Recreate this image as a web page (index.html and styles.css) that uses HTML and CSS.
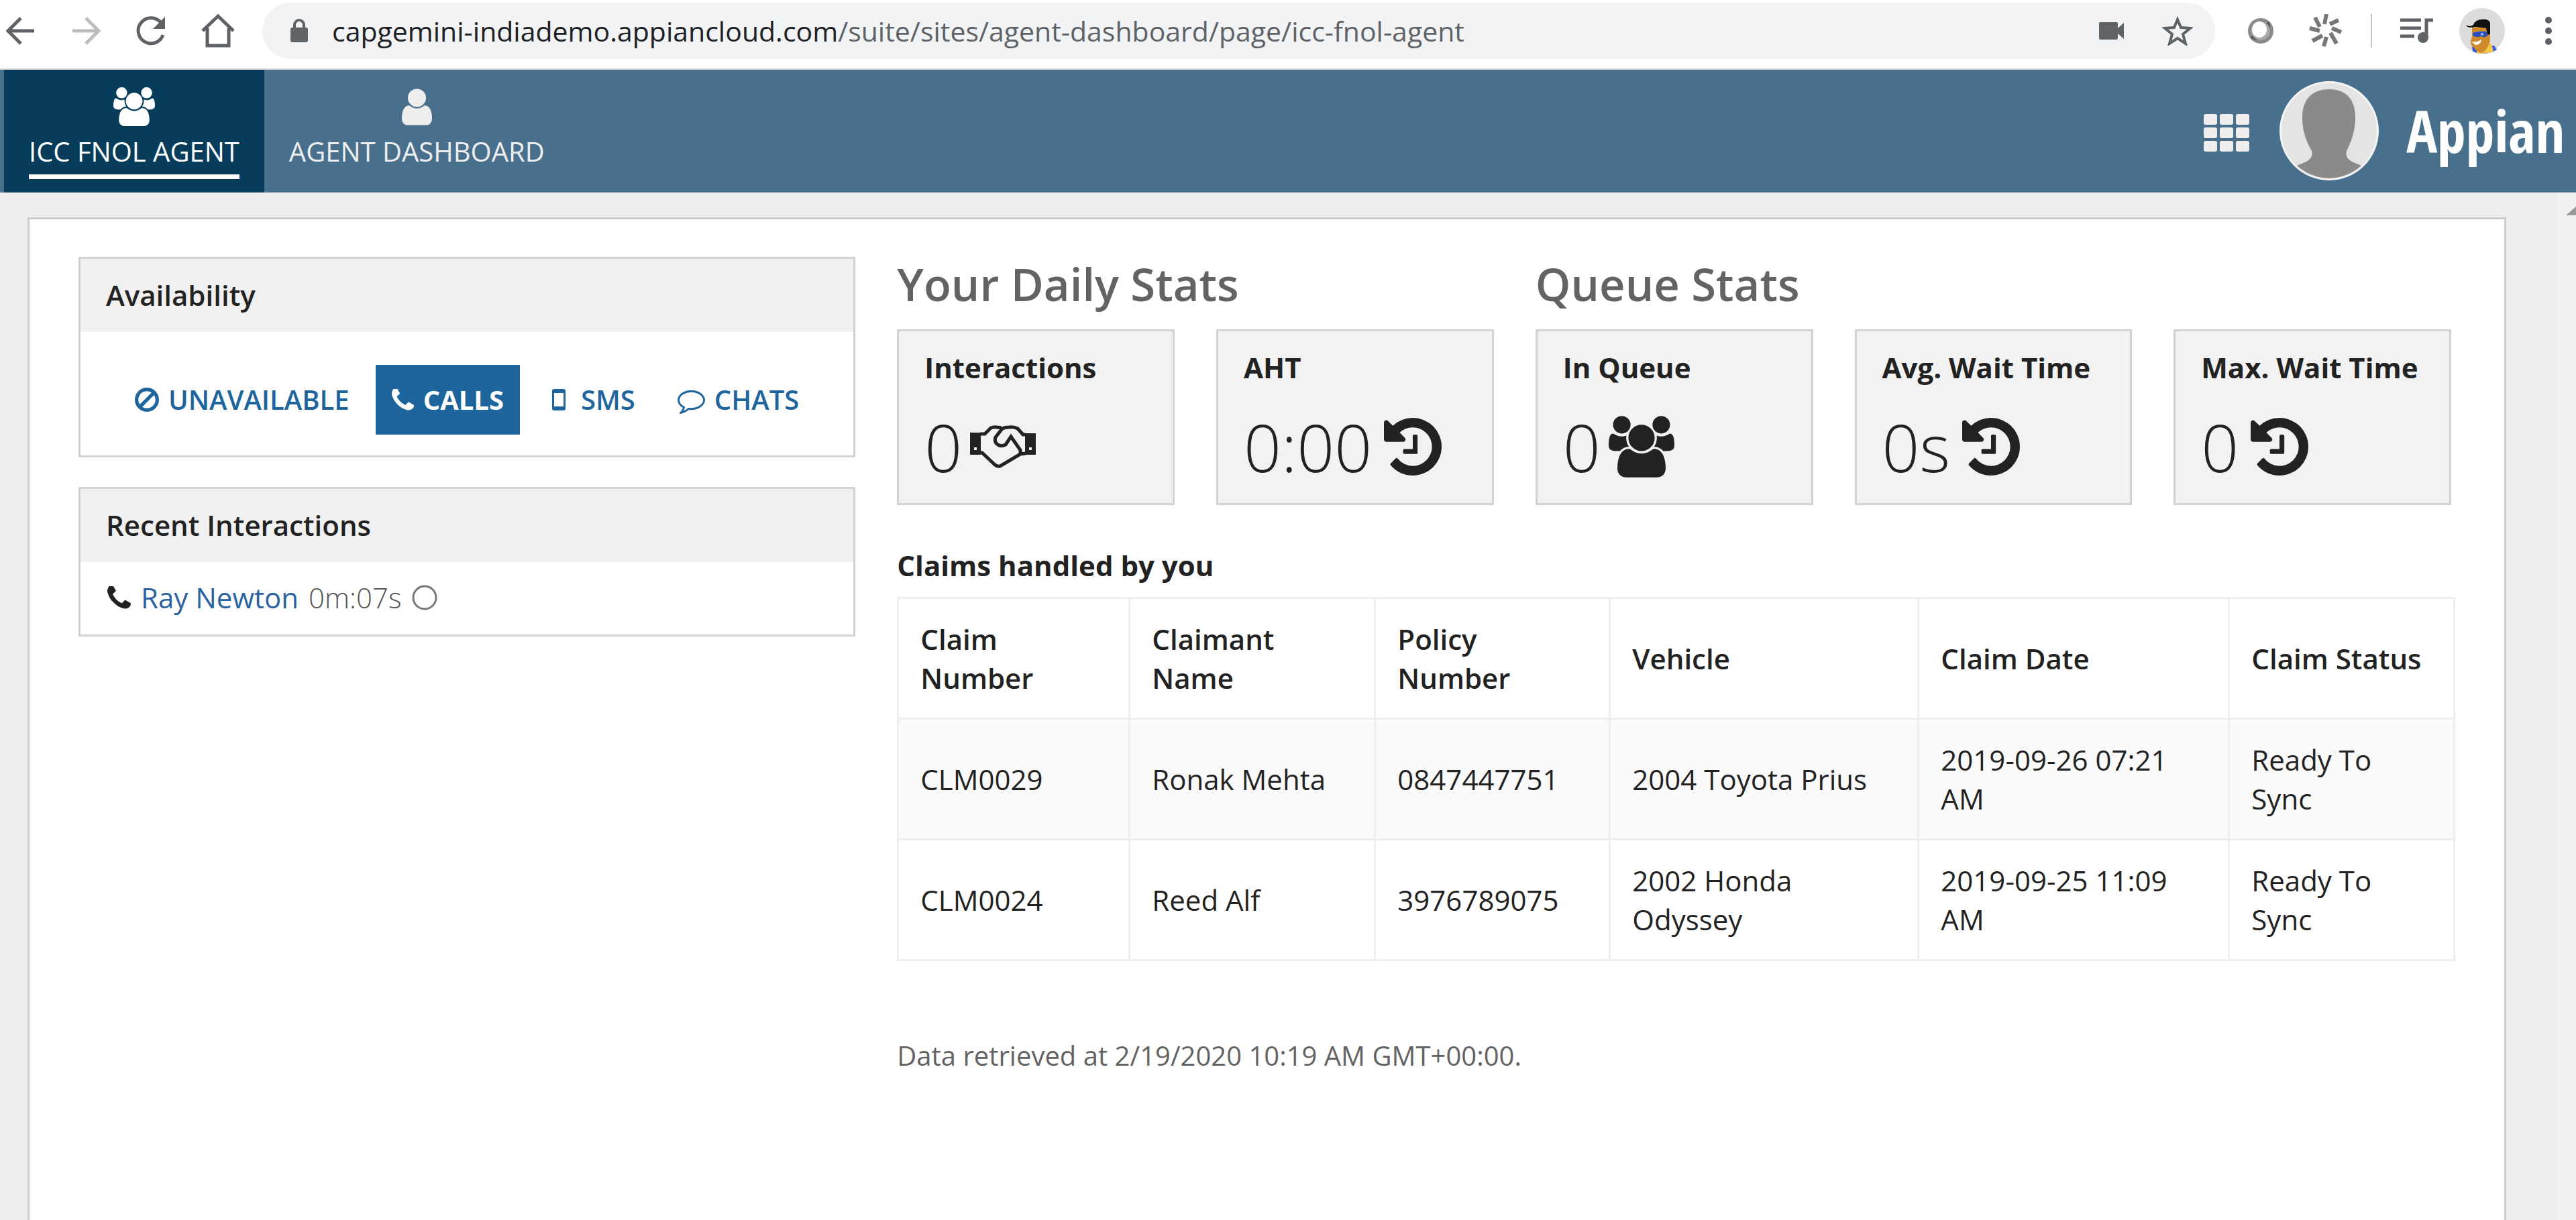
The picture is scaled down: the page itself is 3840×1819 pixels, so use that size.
FILE: index.html
```html
<!DOCTYPE html>
<html lang="en">
<head>
  <meta charset="UTF-8">
  <meta name="viewport" content="width=device-width, initial-scale=1.0">
  <title>ICC FNOL Agent</title>
  <link rel="stylesheet" href="styles.css">
</head>
<body>
  <!-- Shared icons -->
  <svg class="sprite" aria-hidden="true">
    <symbol id="i-users" viewBox="-64 0 1920 1792"><path d="M529 896q-162 5-265 128h-134q-82 0-138-40.5t-56-118.5q0-353 124-353 6 0 43.5 21t97.5 42.5 119 21.5q67 0 133-23-5 37-5 66 0 139 81 256zm1071 637q0 120-73 189.5t-194 69.5h-874q-121 0-194-69.5t-73-189.5q0-53 3.5-103.5t14-109 26.5-108.5 43-97.5 62-81 85.5-53.5 111.5-20q10 0 43 21.5t73 48 107 48 135 21.5 135-21.5 107-48 73-48 43-21.5q61 0 111.5 20t85.5 53.5 62 81 43 97.5 26.5 108.5 14 109 3.5 103.5zm-1024-1277q0 106-75 181t-181 75-181-75-75-181 75-181 181-75 181 75 75 181zm704 384q0 159-112.5 271.5t-271.5 112.5-271.5-112.5-112.5-271.5 112.5-271.5 271.5-112.5 271.5 112.5 112.5 271.5zm576 225q0 78-56 118.5t-138 40.5h-134q-103-123-265-128 81-117 81-256 0-29-5-66 66 23 133 23 59 0 119-21.5t97.5-42.5 43.5-21q124 0 124 353zm-128-609q0 106-75 181t-181 75-181-75-75-181 75-181 181-75 181 75 75 181z"/></symbol>
    <symbol id="i-phone" viewBox="192 256 1408 1408"><path transform="translate(0 64)" d="M1600 1240q0 27-10 70.5t-21 68.5q-21 50-122 106-94 51-186 51-27 0-53-3.5t-57.5-12.5-47-14.5-55.5-20.5-49-18q-98-35-175-83-127-79-264-216t-216-264q-48-77-83-175-3-9-18-49t-20.5-55.5-14.5-47-12.5-57.5-3.5-53q0-92 51-186 56-101 106-122 25-11 68.5-21t70.5-10q14 0 21 3 18 6 53 76 11 19 30 54t35 63.5 31 53.5q3 4 17.5 25t21.5 35.5 7 28.5q0 20-28.5 50t-62 55-62 53-28.5 46q0 9 5 22.5t8.5 20.5 14 24 11.5 19q76 137 174 235t235 174q2 1 19 11.5t24 14 20.5 8.5 22.5 5q18 0 46-28.5t53-62 55-62 50-28.5q14 0 28.5 7t35.5 21.5 25 17.5q25 15 53.5 31t63.5 35 54 30q70 35 76 53 3 7 3 21z"/></symbol>
    <symbol id="i-history" viewBox="128 128 1536 1536"><path d="M1664 896q0 156-61 298t-164 245-245 164-298 61q-172 0-327-72.5t-264-204.5q-7-10-6.5-22.5t8.5-20.5l137-138q10-9 25-9 16 2 23 12 73 95 179 147t225 52q104 0 198.5-40.5t163.5-109.5 109.5-163.5 40.5-198.5-40.5-198.5-109.5-163.5-163.5-109.5-198.5-40.5q-98 0-188 35.5t-160 101.5l137 138q31 30 14 69-17 40-59 40h-448q-26 0-45-19t-19-45v-448q0-42 40-59 39-17 69 14l130 129q107-101 244.5-156.5t284.5-55.5q156 0 298 61t245 164 164 245 61 298zm-640-288v448q0 14-9 23t-23 9h-320q-14 0-23-9t-9-23v-64q0-14 9-23t23-9h224v-352q0-14 9-23t23-9h64q14 0 23 9t9 23z"/></symbol>
  </svg>

  <!-- Browser toolbar -->
  <div class="toolbar">
    <button class="tool" aria-label="Back"><svg width="44" height="44" viewBox="0 0 44 44" class="line"><path d="M42 22H4M22 3L3 22l19 19"/></svg></button>
    <button class="tool disabled" aria-label="Forward"><svg width="44" height="44" viewBox="0 0 44 44" class="line"><path d="M2 22h38M22 3l19 19-19 19"/></svg></button>
    <button class="tool" aria-label="Reload"><svg width="44" height="44" viewBox="0 0 44 44"><path class="line" d="M40 28A19 19 0 1 1 37 10"/><path d="M43 1v18H25z"/></svg></button>
    <button class="tool" aria-label="Home"><svg width="50" height="50" viewBox="0 0 50 50" class="line"><path d="M2 25L25 3l23 22M9 21v26h32V21"/></svg></button>
    <div class="address">
      <svg width="26" height="36" viewBox="0 0 26 36"><rect y="13" width="26" height="22" rx="3"/><path class="line thin" d="M6 15V9a7 7 0 0 1 14 0v6"/></svg>
      <p class="url">capgemini-indiademo.appiancloud.com<span>/suite/sites/agent-dashboard/page/icc-fnol-agent</span></p>
      <button class="tool" aria-label="Camera"><svg width="38" height="26" viewBox="0 0 38 26"><path d="M2 0h24q2 0 2 2v7l9-8v24l-9-8v7q0 2-2 2H2q-2 0-2-2V2q0-2 2-2z"/></svg></button>
      <button class="tool" aria-label="Bookmark"><svg width="46" height="44" viewBox="0 0 46 44"><path class="line thin" d="M23 5l5 12 14 1-11 9 4 14-12-8-12 8 4-14-11-9 14-1z"/></svg></button>
    </div>
    <div class="extensions">
      <svg width="40" height="40" viewBox="0 0 40 40"><circle cx="20" cy="20" r="19" fill="#8a8a8a"/><path d="M32 6A19 19 0 0 1 4 30z" fill="#595959"/><circle cx="20" cy="20" r="14" fill="#a8a8a8"/><ellipse cx="18" cy="18" rx="11" ry="12" fill="#fff"/></svg>
      <svg width="50" height="50" viewBox="0 0 50 50" class="rays"><path d="M23 15l3-15M31 15l13-6M34 21l14 6M32 28l9 16M26 34l-4 14M20 32L5 40M16 25L1 21M16 19L9 5"/></svg>
      <span class="divider"></span>
      <svg width="50" height="38" viewBox="0 0 50 38"><path class="line" d="M0 3h31M0 15h31M0 27h21M39 28V3h10"/><circle cx="34" cy="29" r="8"/></svg>
      <svg class="profile" width="68" height="68" viewBox="0 0 68 68"><circle cx="34" cy="34" r="34" fill="#dcdcdc"/><path d="M19 58l5-3 24 1 4 0 4 6q-9 6-22 6-8 0-14-4z" fill="#3457d5"/><path d="M26 55l22-2 3 12q-8 3-17 3-5 0-8-1z" fill="#f2c94c"/><path d="M19 29l27-2v22q-3 12-12 18-9-2-12-8-6-4-5-9l2-8z" fill="#cf8a2e"/><path d="M10 25q5 4 11 0 3-8 13-8 10-1 12 5v17l-4 1-2-10-16-2q-12 3-14-3z" fill="#111"/><path d="M20 37q8-3 20-2l3 5q-5 6-10 2-7 3-13-1z" fill="#2c4fb8"/><circle cx="34" cy="39" r="2" fill="#9db6ff"/><path d="M18 50q8 2 15-3-1 8-9 8z" fill="#fff"/></svg>
      <svg width="10" height="42" viewBox="0 0 10 42"><circle cx="5" cy="5" r="5"/><circle cx="5" cy="21" r="5"/><circle cx="5" cy="37" r="5"/></svg>
    </div>
  </div>

  <header class="header">
    <nav class="tabs">
      <a class="tab active" href="#"><svg width="62" height="58"><use href="#i-users"/></svg><span>ICC FNOL AGENT</span></a>
      <a class="tab" href="#"><svg width="45" height="58" viewBox="256 60 1280 1650"><path d="M1536 1399q0 109-62.5 187t-150.5 78h-854q-88 0-150.5-78t-62.5-187q0-85 8.5-160.5t31.5-152 58.5-131 94-89 134.5-34.5q131 128 313 128t313-128q76 0 134.5 34.5t94 89 58.5 131 31.5 152 8.5 160.5zm-256-887q0 159-112.5 271.5t-271.5 112.5-271.5-112.5-112.5-271.5 112.5-271.5 271.5-112.5 271.5 112.5 112.5 271.5z"/></svg><span>AGENT DASHBOARD</span></a>
    </nav>
    <div class="account">
      <button class="apps" aria-label="Sites"><svg width="68" height="56" viewBox="0 0 68 56"><rect width="20" height="16" rx="3"/><rect x="24" width="20" height="16" rx="3"/><rect x="48" width="20" height="16" rx="3"/><rect y="20" width="20" height="16" rx="3"/><rect x="24" y="20" width="20" height="16" rx="3"/><rect x="48" y="20" width="20" height="16" rx="3"/><rect y="40" width="20" height="16" rx="3"/><rect x="24" y="40" width="20" height="16" rx="3"/><rect x="48" y="40" width="20" height="16" rx="3"/></svg></button>
      <button class="avatar" aria-label="Profile"><svg width="148" height="148" viewBox="0 0 148 148"><circle cx="74" cy="74" r="74" fill="#f4f4f4"/><circle cx="74" cy="74" r="71" fill="#e4e4e4"/><path d="M74 12c26 0 39 16 39 42 0 22-7 38-13 50-2 8 2 12 8 16l14 6a71 71 0 0 1-96 0l14-6c6-4 10-8 8-16-7-12-14-28-14-50 0-26 14-42 40-42z" fill="#8a8a8a"/></svg></button>
      <a class="logo" href="#">Appian</a>
    </div>
  </header>

  <div class="page">
    <main class="content">
      <aside class="sidebar">
        <section class="panel">
          <h2>Availability</h2>
          <div class="modes">
            <button class="mode"><svg width="36" height="36" viewBox="128 128 1536 1536"><path d="M1440 893q0-161-87-295l-754 753q137 89 297 89 111 0 211.5-43.5t173.5-116.5 116-174.5 43-212.5zm-999 299l755-754q-135-91-300-91-148 0-273 73t-198 199-73 274q0 162 89 299zm1223-299q0 157-61 300t-163.5 246-245 164-298.5 61-298.5-61-245-164-163.5-246-61-300 61-299.5 163.5-245.5 245-164 298.5-61 298.5 61 245 164 163.5 245.5 61 299.5z"/></svg>UNAVAILABLE</button>
            <button class="mode selected"><svg width="33" height="33"><use href="#i-phone"/></svg>CALLS</button>
            <button class="mode"><svg width="38" height="32" viewBox="0 0 38 32"><path fill-rule="evenodd" d="M12 0h14q3 0 3 3v26q0 3-3 3H12q-3 0-3-3V3q0-3 3-3zm0 6v20h14V6z"/></svg>SMS</button>
            <button class="mode"><svg width="41" height="41" viewBox="0 0 1792 1792"><path d="M896 384q-204 0-381.5 69.5t-282 187.5-104.5 255q0 112 71.5 213.5t201.5 175.5l87 50-27 96q-24 91-70 172 152-63 275-171l43-38 57 6q69 8 130 8 204 0 381.5-69.5t282-187.5 104.5-255-104.5-255-282-187.5-381.5-69.5zm896 512q0 174-120 321.5t-326 233-450 85.5q-70 0-145-8-198 175-460 242-49 14-114 22h-5q-15 0-27-10.500t-16-27.500v-1q-3-4-.5-12t2-10 4.500-9.500l6-9 7-8.500 8-9q7-8 31-34.500t34.500-38 31-39.500 32.500-51 27-59 26-76q-157-89-247.500-220t-90.500-281q0-174 120-321.500t326-233 450-85.500 450 85.500 326 233 120 321.500z"/></svg>CHATS</button>
          </div>
        </section>

        <section class="panel">
          <h2>Recent Interactions</h2>
          <p class="interaction">
            <svg width="35" height="35"><use href="#i-phone"/></svg>
            <a href="#">Ray Newton</a>
            <span class="duration">0m:07s</span>
            <svg width="38" height="38" viewBox="0 0 38 38" class="status"><circle cx="19" cy="19" r="17"/></svg>
          </p>
        </section>
      </aside>

      <div class="main">
        <div class="stats">
          <h1 class="daily">Your Daily Stats</h1>
          <h1 class="queue">Queue Stats</h1>
          <div class="stat">
            <h3>Interactions</h3>
            <p>0<svg width="98" height="64" viewBox="0 0 98 64"><path fill-rule="evenodd" d="M0 11h16v33H0zM6 33v4h4v-4zM82 12h16v32H82zM88 33v4h4v-4z"/><path class="line" d="M15 13h7l9-9q4-2 9-1 5 0 8 2M15 41h3l18 17q4 4 9 3l30-18 8-1M46 6q5-3 12-3 8-1 13 2l8 9h4M48 5L38 18q-2 6 2 10 6 5 13 1l8-12 14 20v6"/></svg></p>
          </div>
          <div class="stat">
            <h3>AHT</h3>
            <p>0:00<svg class="history" width="86" height="86"><use href="#i-history"/></svg></p>
          </div>
          <div class="stat">
            <h3>In Queue</h3>
            <p>0<svg width="98" height="92"><use href="#i-users"/></svg></p>
          </div>
          <div class="stat">
            <h3>Avg. Wait Time</h3>
            <p>0s<svg class="history" width="86" height="86"><use href="#i-history"/></svg></p>
          </div>
          <div class="stat">
            <h3>Max. Wait Time</h3>
            <p>0<svg class="history" width="86" height="86"><use href="#i-history"/></svg></p>
          </div>
        </div>

        <table class="claims">
          <caption>Claims handled by you</caption>
          <thead>
            <tr>
              <th class="col-number">Claim Number</th>
              <th class="col-name">Claimant Name</th>
              <th class="col-policy">Policy Number</th>
              <th class="col-vehicle">Vehicle</th>
              <th class="col-date">Claim Date</th>
              <th class="col-status">Claim Status</th>
            </tr>
          </thead>
          <tbody>
            <tr>
              <td>CLM0029</td>
              <td>Ronak Mehta</td>
              <td>0847447751</td>
              <td>2004 Toyota Prius</td>
              <td>2019-09-26 07:21 AM</td>
              <td>Ready To Sync</td>
            </tr>
            <tr>
              <td>CLM0024</td>
              <td>Reed Alf</td>
              <td>3976789075</td>
              <td>2002 Honda Odyssey</td>
              <td>2019-09-25 11:09 AM</td>
              <td>Ready To Sync</td>
            </tr>
          </tbody>
        </table>

        <p class="retrieved">Data retrieved at 2/19/2020 10:19 AM GMT+00:00.</p>
      </div>
    </main>
    <div class="scrollbar"></div>
  </div>
</body>
</html>
```

FILE: styles.css
```css
* {
  box-sizing: border-box;
}

body {
  margin: 0;
  min-height: 100vh;
  display: flex;
  flex-direction: column;
  font-family: "Open Sans", "Noto Sans", sans-serif;
  font-size: 42px;
  line-height: 58px;
  color: #222;
  background: #efefef;
}

h1, h2, h3, p {
  margin: 0;
}

a {
  color: inherit;
  text-decoration: none;
}

button {
  margin: 0;
  padding: 0;
  border: 0;
  background: none;
  font: inherit;
  color: inherit;
}

svg {
  display: block;
  flex: none;
  fill: currentColor;
}

.sprite {
  position: absolute;
  width: 0;
  height: 0;
}

.line {
  fill: none;
  stroke: currentColor;
  stroke-width: 5px;
}

.thin {
  stroke-width: 4px;
}

/* Browser toolbar */
.toolbar {
  display: flex;
  align-items: center;
  height: 104px;
  padding: 0 36px 10px 9px;
  background: #fff;
  border-bottom: 2px solid #d5d7da;
  color: #5f6368;
}

.toolbar > .tool {
  margin-right: 53px;
}

.toolbar > .tool:nth-of-type(4) {
  margin-right: 41px;
}

.disabled {
  color: #bbbdbf;
}

.address {
  flex: 1;
  display: flex;
  align-items: center;
  height: 84px;
  padding: 0 33px 0 42px;
  border-radius: 42px;
  background: #f1f3f4;
}

.url {
  flex: 1;
  margin-left: 36px;
  font-size: 41px;
  color: #202124;
}

.url span {
  color: #5f6368;
}

.address .tool + .tool {
  margin-left: 56px;
}

.extensions {
  display: flex;
  align-items: center;
  margin-left: 48px;
}

.extensions > :nth-child(2) {
  margin-left: 52px;
}

.extensions > :nth-child(n+3) {
  margin-left: 42px;
}

.extensions > .profile {
  margin-left: 38px;
}

.extensions > :last-child {
  margin-left: 60px;
}

.rays {
  fill: none;
  stroke: #777;
  stroke-width: 6px;
}

.divider {
  width: 2px;
  height: 50px;
  background: #c4c6c8;
}

/* Site header */
.header {
  display: flex;
  justify-content: space-between;
  height: 183px;
  padding: 0 17px 0 6px;
  background: #48708c;
  color: #fff;
}

.tabs {
  display: flex;
}

.tab {
  display: flex;
  flex-direction: column;
  align-items: center;
  padding: 26px 37px 0;
  font-size: 40px;
  color: #eee;
}

.tab span {
  margin-top: 9px;
  padding-bottom: 5px;
  border-bottom: 7px solid transparent;
}

.tab.active {
  background: #083c5b;
  color: #fff;
}

.tab.active span {
  border-color: #fff;
}

.account {
  display: flex;
  align-items: center;
  padding-bottom: 1px;
}

.apps {
  margin: 6px 45px 0 0;
  color: #eee;
}

.avatar {
  margin-right: 41px;
}

.logo {
  font-family: "Liberation Sans Narrow", "Open Sans Condensed", "Roboto Condensed", sans-serif;
  font-size: 86px;
  font-weight: 700;
}

/* Page body */
.page {
  flex: 1;
  display: flex;
}

.content {
  flex: 1;
  display: grid;
  grid-template-columns: minmax(0, 1fr) minmax(0, 2fr);
  align-items: start;
  gap: 62px;
  margin: 37px 77px 0 41px;
  padding: 56px 79px 0 73px;
  background: #fff;
  border: 3px solid #ccc;
  border-bottom: 0;
}

.scrollbar {
  width: 27px;
  background: #f1f1f1;
  overflow: hidden;
}

.scrollbar::before {
  content: "";
  display: block;
  margin: 21px 0 0 12px;
  border: 15px solid transparent;
  border-top: 0;
  border-bottom: 13px solid #999;
}

.sidebar {
  display: grid;
  gap: 44px;
}

.panel {
  border: 3px solid #d2d2d2;
}

.panel h2 {
  padding: 25px 38px 26px;
  font-size: 42px;
  font-weight: 600;
  background: #f0f0f0;
}

.modes {
  display: flex;
  justify-content: center;
  gap: 15px;
  padding: 49px 0 31px;
  font-size: 40px;
  font-weight: 600;
  color: #1d659c;
}

.mode {
  display: flex;
  align-items: center;
  gap: 14px;
  height: 104px;
  padding: 0 24px;
}

.mode.selected {
  background: #1d659c;
  color: #fff;
  font-weight: 700;
}

.interaction {
  display: flex;
  align-items: center;
  gap: 15px;
  padding: 24px 40px 26px;
}

.interaction a {
  color: #2b62a0;
}

.duration {
  font-weight: 300;
  color: #555;
}

.status {
  fill: none;
  stroke: #777;
  stroke-width: 3px;
}

/* Stats */
.stats {
  display: grid;
  grid-template-columns: repeat(5, minmax(0, 1fr));
  column-gap: 62px;
}

.stats h1 {
  padding-bottom: 28px;
  font-size: 67px;
  line-height: 80px;
  font-weight: 600;
  color: #636363;
}

.daily {
  grid-column: span 2;
}

.queue {
  grid-column: span 3;
}

.stat {
  height: 262px;
  padding: 25px 38px;
  background: #f2f2f2;
  border: 3px solid #d2d2d2;
}

.stat h3 {
  font-size: 42px;
  font-weight: 700;
}

.stat p {
  display: flex;
  align-items: center;
  gap: 12px;
  margin-top: 39px;
  font-size: 98px;
  line-height: 100px;
  font-weight: 300;
}

.stat .history {
  margin-left: 6px;
}

/* Claims table */
.claims {
  width: 100%;
  margin-top: 61px;
  table-layout: fixed;
  border-collapse: collapse;
}

.claims caption {
  padding-bottom: 18px;
  text-align: left;
  font-weight: 700;
}

.claims th,
.claims td {
  height: 180px;
  padding: 0 32px;
  border: 3px solid #eee;
  text-align: left;
  vertical-align: middle;
}

.claims th {
  font-weight: 600;
}

.claims tbody tr:nth-child(odd) {
  background: #fafafa;
}

.col-number {
  width: 345px;
}

.col-name {
  width: 366px;
}

.col-policy {
  width: 350px;
}

.col-vehicle {
  width: 460px;
}

.col-date {
  width: 463px;
}

.col-status {
  width: 336px;
}

.retrieved {
  margin-top: 112px;
  font-size: 40px;
  color: #636363;
}
```
